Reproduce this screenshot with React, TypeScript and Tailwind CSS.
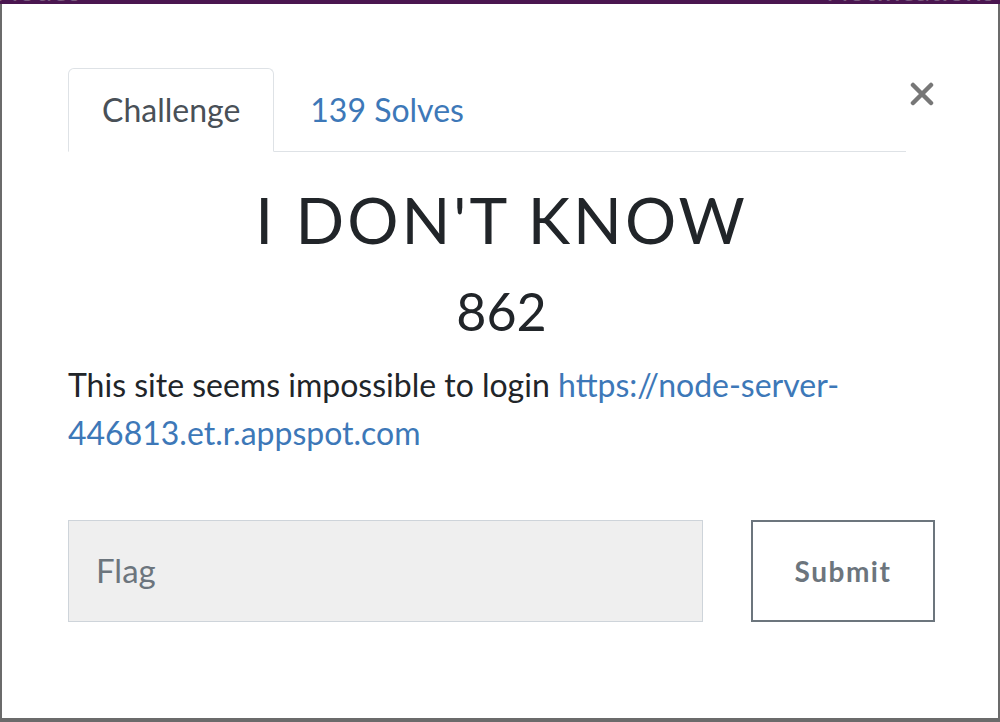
import React from "react";

export default function App() {
  return (
    <div className="w-[1000px] h-[722px] bg-[#6b6b6b] flex flex-col overflow-hidden" style={{ fontFamily: "Lato, 'Noto Sans', sans-serif" }}>
      <div className="h-[4px] bg-[#4a1650] shrink-0 relative overflow-hidden">
        <span className="absolute left-[-4px] top-[-26px] text-[30px] leading-[30px] text-[#7a5a7e]">Nodes</span>
        <span className="absolute left-[826px] top-[-26px] text-[30px] leading-[30px] text-[#7a5a7e]">Notifications</span>
      </div>
      <div className="flex-1 mx-[2px] mb-[4px] bg-white pl-[66px] pr-[63px] pt-[64px]">
        <div className="flex items-start">
          <div className="w-[838px] flex items-end border-b border-[#dee2e6]">
            <div className="-mb-px h-[84px] px-[33px] flex items-center border border-[#dee2e6] border-b-white rounded-t-[6px] bg-white text-[32px] text-[#495057]">
              Challenge
            </div>
            <div className="h-[83px] px-[36px] flex items-center text-[32px] text-[#3d78b8]">139 Solves</div>
          </div>
          <div className="ml-auto mt-[12px] mr-[-1px] w-[28px] h-[28px] flex items-center justify-center">
            <svg width="24" height="24" viewBox="0 0 24 24">
              <path d="M3 3 L21 21 M21 3 L3 21" stroke="#777" strokeWidth="4.5" strokeLinecap="round" />
            </svg>
          </div>
        </div>
        <div className="mt-[30px] text-center text-[64px] leading-[76px] tracking-[3px] text-[#212529]">I DON'T KNOW</div>
        <div className="mt-[23px] text-center text-[52px] leading-[60px] text-[#212529]">862</div>
        <p className="mt-[20px] text-[32px] leading-[48px] text-[#212529]">
          This site seems impossible to login{" "}
          <span className="text-[#3d78b8]">https://node-server-446813.et.r.appspot.com</span>
        </p>
        <div className="mt-[63px] flex">
          <div className="w-[635px] h-[102px] bg-[#efefef] border border-[#ced4da] flex items-center pl-[27px] text-[33px] text-[#6c757d]">
            Flag
          </div>
          <div className="ml-[48px] w-[184px] h-[102px] border-2 border-[#6c757d] flex items-center justify-center text-[28px] font-bold tracking-[1.5px] text-[#6c757d]">
            Submit
          </div>
        </div>
      </div>
    </div>
  );
}
